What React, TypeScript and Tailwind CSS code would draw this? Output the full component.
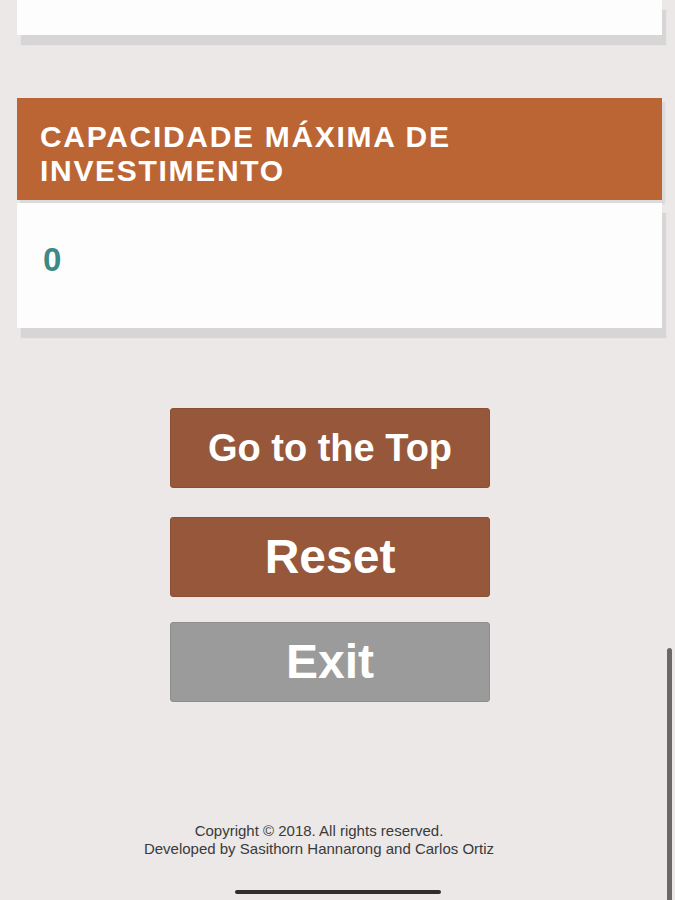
import React from "react";

export default function App() {
  return (
    <div className="relative min-h-[900px] h-[900px] overflow-hidden bg-[#ebe8e7] font-['Liberation_Sans',Arial,sans-serif]">
      <div className="pl-[17px] pr-[13px]">
        <div className="h-[35px] bg-[#fdfdfd] shadow-[4px_10px_1px_#d7d5d5]" />
        <div className="mt-[63px] bg-[#bb6535] pl-[23px] pr-[20px] pt-[22px] pb-[12px] shadow-[3px_4px_1px_#dcdada]">
          <h2 className="text-[30px] leading-[34px] font-bold tracking-[1.7px] text-white">
            CAPACIDADE MÁXIMA DE INVESTIMENTO
          </h2>
        </div>
        <div className="mt-[3px] h-[125px] bg-[#fdfdfd] pl-[26px] pt-[41px] shadow-[4px_10px_1px_#d7d5d5]">
          <div className="text-[33px] leading-[32px] font-bold text-[#3b8a87]">0</div>
        </div>
      </div>

      <div className="mt-[80px] ml-[170px] flex w-[320px] flex-col">
        <button className="flex h-[80px] items-center justify-center rounded-[3px] border border-[#8a4f34] bg-[#96573a] text-[38px] font-bold text-white">
          Go to the Top
        </button>
        <button className="mt-[29px] flex h-[80px] items-center justify-center rounded-[3px] border border-[#8a4f34] bg-[#96573a] text-[48px] font-bold text-white">
          Reset
        </button>
        <button className="mt-[25px] flex h-[80px] items-center justify-center rounded-[3px] border border-[#8e8e8e] bg-[#9b9b9b] text-[48px] font-bold text-white">
          Exit
        </button>
      </div>

      <div className="mt-[120px] pr-[37px] text-center text-[15px] leading-[18px] text-[#3a3a3a]">
        <p>Copyright © 2018. All rights reserved.</p>
        <p>Developed by Sasithorn Hannarong and Carlos Ortiz</p>
      </div>

      <div className="absolute left-[235px] top-[890px] h-[4px] w-[206px] rounded-full bg-[#2e2e2e]" />
      <div className="absolute left-[667px] top-[648px] h-[260px] w-[5px] rounded-t-[3px] bg-[#6b6968]" />
    </div>
  );
}
